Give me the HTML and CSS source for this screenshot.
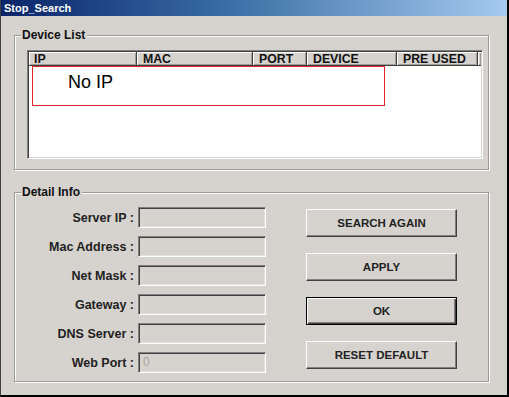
FILE: index.html
```html
<!DOCTYPE html>
<html lang="en">
<head>
    <meta charset="UTF-8">
    <meta name="viewport" content="width=device-width, initial-scale=1.0">
    <title>Stop_Search</title>
    <link rel="stylesheet" href="styles.css">
</head>
<body>
    <div class="window">
        <div class="titlebar">Stop_Search</div>

        <div class="content">
            <fieldset class="group device-list">
                <legend>Device List</legend>
                <div class="list">
                    <div class="list-head">
                        <span class="col col-ip">IP</span>
                        <span class="col col-mac">MAC</span>
                        <span class="col col-port">PORT</span>
                        <span class="col col-device">DEVICE</span>
                        <span class="col col-pre">PRE USED</span>
                        <span class="col col-rest"></span>
                    </div>
                    <div class="list-body">
                        <div class="no-ip">No IP</div>
                    </div>
                </div>
            </fieldset>

            <fieldset class="group detail-info">
                <legend>Detail Info</legend>
                <div class="detail">
                    <div class="form">
                        <div class="row"><label>Server IP :</label><span class="field"></span></div>
                        <div class="row"><label>Mac Address :</label><span class="field"></span></div>
                        <div class="row"><label>Net Mask :</label><span class="field"></span></div>
                        <div class="row"><label>Gateway :</label><span class="field"></span></div>
                        <div class="row"><label>DNS Server :</label><span class="field"></span></div>
                        <div class="row"><label>Web Port :</label><span class="field">0</span></div>
                    </div>
                    <div class="actions">
                        <button class="btn">SEARCH AGAIN</button>
                        <button class="btn">APPLY</button>
                        <button class="btn btn-default">OK</button>
                        <button class="btn">RESET DEFAULT</button>
                    </div>
                </div>
            </fieldset>
        </div>
    </div>
</body>
</html>
```

FILE: styles.css
```css
body {
    margin: 0;
    padding: 0;
    font-family: 'Liberation Sans', Arial, sans-serif;
    background: #fff;
}
.window {
    width: 509px;
    height: 397px;
    box-sizing: border-box;
    background-color: #d6d3ce;
    border-left: 1px solid #404040;
    border-right: 2px solid #000;
    border-bottom: 2px solid #000;
}
.titlebar {
    height: 16px;
    padding-left: 3px;
    background: linear-gradient(90deg, #0a246a 0%, #3a6ea5 45%, #a6caf0 100%);
    color: white;
    font-size: 11px;
    font-weight: bold;
    line-height: 16px;
}
.content {
    padding: 12px 18px 0 13px;
}
.group {
    margin: 0;
    border: 1px solid #9d9a94;
    box-shadow: 1px 1px 0 #fff, inset 1px 1px 0 #fff;
}
.group legend {
    margin-left: -6px;
    padding: 0 2px 0 1px;
    font-size: 12px;
    font-weight: bold;
    line-height: 14px;
    color: #111;
    background-color: #d6d3ce;
}
.device-list {
    padding: 8px 5px 10px 12px;
}
.detail-info {
    margin-top: 15px;
    padding: 8px 5px 8px 12px;
}
.list {
    height: 109px;
    box-sizing: border-box;
    border: 1px solid;
    border-color: #808080 #fff #fff #808080;
    box-shadow: inset 1px 1px 0 #404040, inset -1px -1px 0 #d6d3ce;
    background-color: white;
    padding: 1px;
}
.list-head {
    display: flex;
    height: 14px;
}
.col {
    box-sizing: border-box;
    height: 14px;
    padding-left: 6px;
    background-color: #d6d3ce;
    border-right: 1px solid #404040;
    border-bottom: 1px solid #404040;
    box-shadow: inset 1px 1px 0 #fff, inset -1px -1px 0 #a09d97;
    font-size: 12.3px;
    font-weight: bold;
    line-height: 14px;
    color: #111;
}
.col-ip { width: 108px; padding-left: 5px; }
.col-mac { width: 116px; }
.col-port { width: 54px; }
.col-device { width: 90px; }
.col-pre { width: 81px; }
.col-rest { flex: 1; padding: 0; border-right: none; }
.no-ip {
    width: 353px;
    height: 40px;
    box-sizing: border-box;
    margin-left: 3px;
    padding: 5px 0 0 35px;
    border: 1px solid #e3242b;
    font-size: 18px;
    line-height: 20px;
    color: #000;
}
.detail {
    display: flex;
}
.form {
    display: flex;
    flex-direction: column;
    gap: 8px;
}
.row {
    display: flex;
    align-items: center;
    gap: 4px;
}
.row label {
    width: 107px;
    text-align: right;
    font-size: 12.5px;
    font-weight: bold;
    color: #222;
}
.field {
    width: 128px;
    height: 21px;
    box-sizing: border-box;
    padding-left: 4px;
    border: 1px solid;
    border-color: #808080 #fff #fff #808080;
    box-shadow: inset 1px 1px 0 #404040, inset -1px -1px 0 #e4e1dc;
    font-size: 12px;
    line-height: 19px;
    color: #a9a6a0;
}
.actions {
    display: flex;
    flex-direction: column;
    gap: 16px;
    margin-left: 40px;
    padding-top: 2px;
}
.btn {
    width: 151px;
    height: 28px;
    box-sizing: border-box;
    padding: 0;
    border: 1px solid;
    border-color: #fff #404040 #404040 #fff;
    box-shadow: inset -1px -1px 0 #808080;
    background-color: #d6d3ce;
    font-family: 'Liberation Sans', Arial, sans-serif;
    font-size: 11.5px;
    font-weight: bold;
    color: #222;
}
.btn-default {
    border: 1px solid #000;
    box-shadow: inset 1px 1px 0 #fff, inset -1px -1px 0 #404040, inset -2px -2px 0 #808080;
}
```
